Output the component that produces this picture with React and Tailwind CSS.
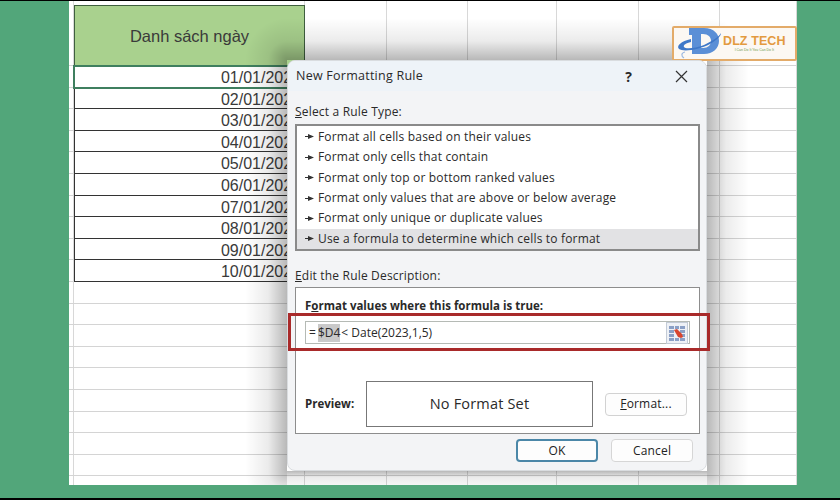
const COLS = [5, 231, 82, 81, 89, 82, 81, 77]
const DATES = ['01/01/2023', '02/01/2023', '03/01/2023', '04/01/2023', '05/01/2023', '06/01/2023', '07/01/2023', '08/01/2023', '09/01/2023', '10/01/2023']
const RULES = [
  'Format all cells based on their values',
  'Format only cells that contain',
  'Format only top or bottom ranked values',
  'Format only values that are above or below average',
  'Format only unique or duplicate values',
  'Use a formula to determine which cells to format',
]

// soft shadow round the dialog, one strip per side
const SHADOWS = [
  'left-[245px] top-[60px] w-[42px] h-[411px] bg-[linear-gradient(to_left,rgba(0,0,0,0.28),rgba(0,0,0,0.08)_45%,rgba(0,0,0,0))]',
  'left-[707px] top-[60px] w-[42px] h-[411px] bg-[linear-gradient(to_right,rgba(0,0,0,0.28),rgba(0,0,0,0.08)_45%,rgba(0,0,0,0))]',
  'left-[287px] top-[18px] w-[420px] h-[42px] bg-[linear-gradient(to_top,rgba(0,0,0,0.28),rgba(0,0,0,0.08)_45%,rgba(0,0,0,0))]',
  'left-[287px] top-[471px] w-[420px] h-[14px] bg-[linear-gradient(to_bottom,rgba(0,0,0,0.28),rgba(0,0,0,0.08)_45%,rgba(0,0,0,0.04))]',
  'left-[245px] top-[18px] w-[42px] h-[42px] bg-[radial-gradient(circle_42px_at_100%_100%,rgba(0,0,0,0.28),rgba(0,0,0,0.08)_45%,rgba(0,0,0,0))]',
  'left-[707px] top-[18px] w-[42px] h-[42px] bg-[radial-gradient(circle_42px_at_0%_100%,rgba(0,0,0,0.28),rgba(0,0,0,0.08)_45%,rgba(0,0,0,0))]',
  'left-[245px] top-[471px] w-[42px] h-[14px] bg-[radial-gradient(circle_42px_at_100%_0%,rgba(0,0,0,0.28),rgba(0,0,0,0.08)_45%,rgba(0,0,0,0))]',
  'left-[707px] top-[471px] w-[42px] h-[14px] bg-[radial-gradient(circle_42px_at_0%_0%,rgba(0,0,0,0.28),rgba(0,0,0,0.08)_45%,rgba(0,0,0,0))]',
]

const Cells = ({ height }) => (
  <div className="flex border-b border-[#d4d4d4]" style={{ height }}>
    {COLS.map((w, i) => (
      <div key={i} className="border-r border-[#d8d8d8] shrink-0" style={{ width: w }} />
    ))}
  </div>
)

const RefIcon = () => (
  <svg width="22" height="22" viewBox="0 0 22 22">
    <rect x="0.5" y="0.5" width="21" height="21" fill="#eef1f6" stroke="#c3cbd6" />
    <g fill="#8ba0c6">
      <rect x="3" y="4" width="5" height="3" />
      <rect x="9" y="4" width="4" height="3" />
      <rect x="14" y="4" width="5" height="3" />
      <rect x="3" y="8" width="5" height="3" />
      <rect x="14" y="8" width="5" height="3" />
      <rect x="3" y="12" width="5" height="3" />
      <rect x="14" y="12" width="5" height="3" />
      <rect x="3" y="16" width="5" height="3" />
      <rect x="9" y="16" width="4" height="3" />
      <rect x="14" y="16" width="5" height="3" />
    </g>
    <path d="M8 8l3-1 5 5 1 3-2 1-3-1z" fill="#d8452f" />
  </svg>
)

const Pointer = () => (
  <svg width="9" height="7" viewBox="0 0 9 7" className="shrink-0 mr-[4px]">
    <path d="M0 3h3V1l6 2.5L3 6V4H0z" fill="#333" />
  </svg>
)

const Logo = () => (
  <div className="absolute left-[672px] top-[26px] w-[125px] h-[35px] bg-[#fcf8f3] border-2 border-[#e3ab69] rounded-[2px] flex items-center">
    <svg width="50" height="31" viewBox="0 0 50 31" className="shrink-0">
      <path d="M15 0h15c10 0 15 6 15 13s-6 13-15 13H18V7h-3z" fill="#5b8fd6" />
      <path d="M27 6h2c5 0 8 3 8 7s-3 7-8 7h-2z" fill="#fcf8f3" />
      <path d="M17 11C7 13 2 18 5 21c4 3 20 1 31-5 7-4 11-8 11-11-2 4-9 8-17 12-10 4-19 4-20 2-1-2 2-4 7-5z" fill="#3f78c8" />
      <path d="M11 24c-4 1-4 4-1 6" fill="none" stroke="#9db9e0" strokeWidth="1.2" />
    </svg>
    <div className="flex flex-col items-center ml-[-1px]">
      <span className="font-['Liberation_Sans',sans-serif] font-bold text-[12.5px] leading-[14px] tracking-[0.1px] text-[#e39a3f]">DLZ TECH</span>
      <span className="font-['Liberation_Sans',sans-serif] text-[3.5px] leading-[5px] text-[#6f9a4c]">I Can Do It You Can Do It</span>
    </div>
  </div>
)

const Button = ({ className, children }) => (
  <div className={`h-[23px] rounded-[4px] bg-[#fdfdfd] flex items-center justify-center text-[12px] text-[#222] ${className}`}>
    {children}
  </div>
)

const Dialog = () => (
  <div className="absolute left-[287px] top-[60px] w-[420px] h-[411px] rounded-[8px] bg-[#f3f4f6] border border-[#d9dcdf] font-['Open_Sans',sans-serif] text-[12px] tracking-[0.18px] text-[#2a2a2a] flex flex-col overflow-hidden">
    <div className="h-[30px] shrink-0 bg-[#eef3f8] flex items-center pl-[8px]">
      <span className="grow text-[12.5px] tracking-[0.25px]">New Formatting Rule</span>
      <span className="font-bold text-[14px] mr-[43px]">?</span>
      <svg width="13" height="13" viewBox="0 0 13 13" className="mr-[18px]">
        <path d="M1 1l11 11M12 1L1 12" stroke="#333" strokeWidth="1.2" />
      </svg>
    </div>
    <div className="pl-[7px] pr-[6px] flex flex-col grow">
      <div className="h-[33px] flex items-start pt-[12px] shrink-0"><span><u>S</u>elect a Rule Type:</span></div>
      <div className="h-[127px] border-2 border-[#8a8a8a] bg-white flex flex-col justify-end shrink-0">
        {RULES.map((r, i) => (
          <div key={r} className={`h-[20.4px] shrink-0 flex items-center pl-[8px] ${i === 5 ? 'bg-[#e2e2e4]' : ''}`}>
            <Pointer />
            <span>{r}</span>
          </div>
        ))}
      </div>
      <div className="h-[36px] flex items-end pb-[2px] shrink-0"><span><u>E</u>dit the Rule Description:</span></div>
      <div className="h-[147px] border border-[#8d8d8d] bg-white px-[9px] flex flex-col shrink-0">
        <div className="h-[33px] flex items-center font-bold text-[11.5px] tracking-normal pt-[2px]"><span>F<u>o</u>rmat values where this formula is true:</span></div>
        <div className="h-[23px] border border-[#b5bab5] flex items-center justify-between pl-[3px] pr-[1px] tracking-normal">
          <span className="flex items-center">=<span className="bg-[#c9c9c9] ml-[2px]">$D4</span><span className="ml-[1px]">&lt; Date(2023,1,5)</span></span>
          <RefIcon />
        </div>
        <div className="mt-[37px] flex items-center">
          <span className="font-bold text-[11.5px] tracking-normal w-[61px]">Preview:</span>
          <div className="w-[227px] h-[46px] border border-[#777] flex items-center justify-center text-[14.5px]">No Format Set</div>
          <Button className="ml-[12px] w-[82px] border border-[#d2d2d2]"><span><u>F</u>ormat...</span></Button>
        </div>
      </div>
      <div className="flex justify-end gap-[13px] mt-[5px] pr-[7px]">
        <Button className="w-[82px] border-2 border-[#4b87a8]">OK</Button>
        <Button className="w-[82px] border border-[#d6d6d6]">Cancel</Button>
      </div>
    </div>
  </div>
)

export default function App() {
  return (
    <div className="relative w-[840px] h-[500px] overflow-hidden bg-[#52a67a]">
      <div className="h-[1px] bg-black" />
      <div className="ml-[69px] w-[728px] h-[484px] bg-white overflow-hidden">
        <Cells height={65} />
        {Array.from({ length: 20 }).map((_, i) => (
          <Cells key={i} height={21.6} />
        ))}
      </div>

      {/* table sits over the sheet grid */}
      <div className="absolute left-[74px] top-[5px] w-[231px] font-['Liberation_Sans',sans-serif] text-[16px] text-[#3a3a3a]">
        <div className="h-[61px] bg-[#a9d18e] border border-[#3f5f3f] flex items-center justify-center text-[16.5px] pt-[1px]">Danh sách ngày</div>
        {DATES.map((d, i) => (
          <div key={d} className={`h-[21.6px] bg-white border-x border-b border-[#333] text-right pr-[3px] leading-[24px] ${i === 0 ? 'outline-2 -outline-offset-1 outline-[#3f7f5f]' : ''}`}>{d}</div>
        ))}
      </div>

      {SHADOWS.map((c) => (
        <div key={c} className={`absolute ${c}`} />
      ))}

      <Logo />
      <Dialog />

      <div className="absolute left-[288px] top-[313px] w-[422px] h-[38px] border-[3px] border-[#a92a2a]" />
      <div className="absolute left-0 bottom-0 w-full h-[2px] bg-black" />
    </div>
  )
}
